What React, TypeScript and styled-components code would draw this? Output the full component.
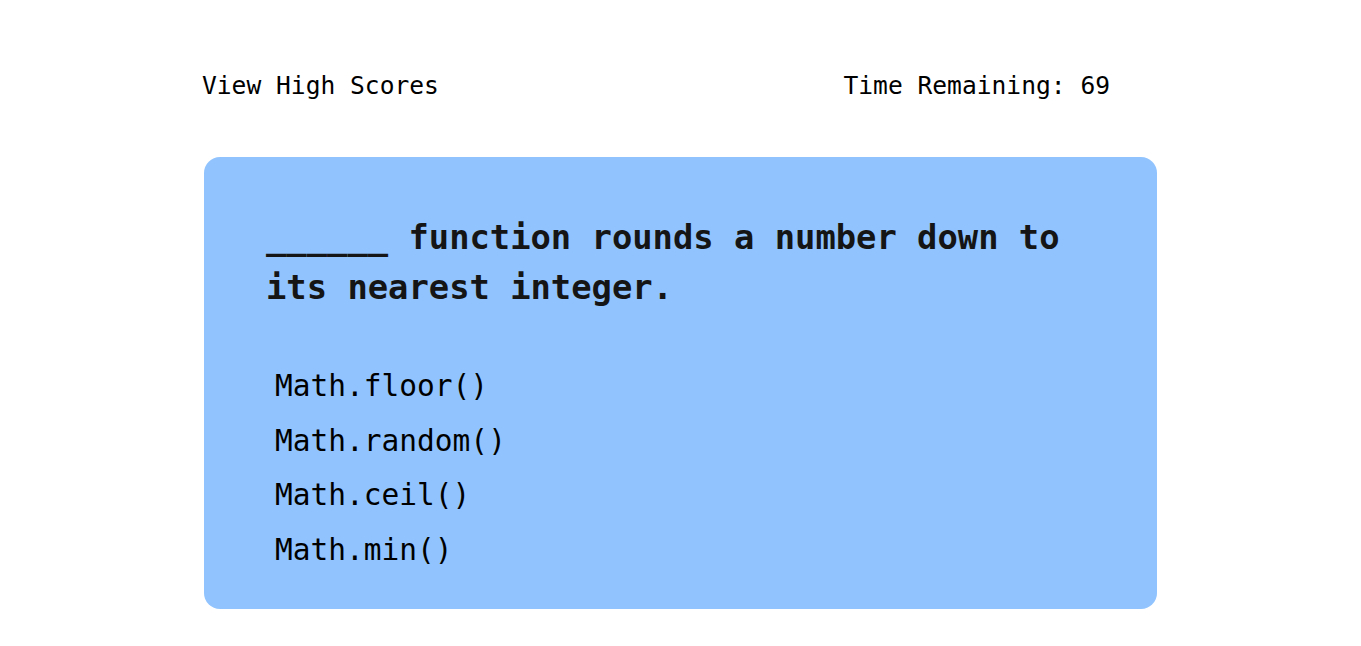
import React from "react";
import styled, { createGlobalStyle } from "styled-components";

const Global = createGlobalStyle`
  html, body { margin: 0; padding: 0; background: #ffffff; }
  body { font-family: "DejaVu Sans Mono", "Liberation Mono", monospace; }
`;

const Page = styled.div`
  padding: 70.5px 0 0 202px;
`;

const Header = styled.header`
  width: 908px;
  display: flex;
  justify-content: space-between;
  align-items: center;
  font-size: 24.6px;
  line-height: 30px;
  color: #000;
`;

const HeaderLink = styled.a`
  color: inherit;
  text-decoration: none;
  cursor: pointer;
`;

const Timer = styled.div``;

const Card = styled.section`
  margin: 56.5px 0 0 2px;
  width: 953px;
  box-sizing: border-box;
  background: #91c4fe;
  border-radius: 16px;
  padding: 56px 60px 31px 62px;
`;

const Question = styled.h2`
  margin: 0;
  font-size: 33.8px;
  line-height: 50px;
  font-weight: 700;
  color: #151515;
`;

const Options = styled.ul`
  list-style: none;
  margin: 46px 0 0 9px;
  padding: 0;
`;

const Option = styled.li`
  font-size: 29.5px;
  line-height: 54.7px;
  color: #000;
  cursor: pointer;
`;

const options = ["Math.floor()", "Math.random()", "Math.ceil()", "Math.min()"];

export default function App() {
  return (
    <>
      <Global />
      <Page>
        <Header>
          <HeaderLink>View High Scores</HeaderLink>
          <Timer>Time Remaining: 69</Timer>
        </Header>
        <Card>
          <Question>______ function rounds a number down to its nearest integer.</Question>
          <Options>
            {options.map((o) => (
              <Option key={o}>{o}</Option>
            ))}
          </Options>
        </Card>
      </Page>
    </>
  );
}
